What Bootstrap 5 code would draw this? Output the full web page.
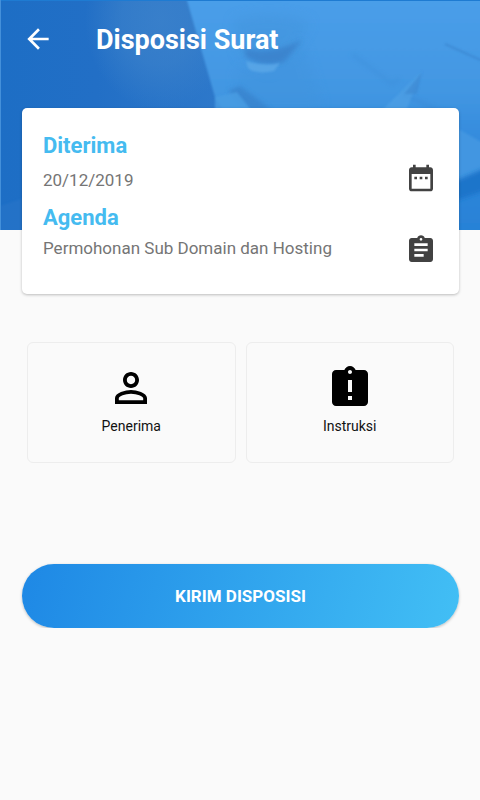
<!DOCTYPE html>
<html lang="id">
<head>
<meta charset="utf-8">
<meta name="viewport" content="width=device-width, initial-scale=1">
<title>Disposisi Surat</title>
<link rel="stylesheet" href="https://cdn.jsdelivr.net/npm/bootstrap@5.3.0/dist/css/bootstrap.min.css">
<style>
body{font-family:Roboto,sans-serif;background:#fafafa;color:#000}
.hero{height:230px;z-index:-1;background:#3b8edb}
.topbar{padding:23px 22px 0;height:108px;gap:42px}
.topbar h1{font-size:27px;line-height:34px;font-weight:700}
.back{width:32px;height:32px}
.page{padding:0 21px 0 22px}
.info{border-radius:5px;padding:22px 22px 22px 21px;min-height:186px;box-shadow:0 1px 3px rgba(0,0,0,.25)}
.info h2{font-size:22px;line-height:32px;font-weight:700;color:#45bbf0}
.info p{font-size:17px;line-height:28px;color:#757575}
.info svg{color:#424242}
.tiles{margin-top:48px;padding:0 5px}
.tiles .row{gap:10px}
.tile{height:121px;border:1px solid #ededed;border-radius:6px;font-size:14px;line-height:20px;color:#111;padding:0 0 6px}
.tile svg{color:#000;margin-bottom:4px}
.send{margin-top:101px;height:64px;padding:8px 12px 6px;font-size:17px;font-weight:700;background:linear-gradient(105deg,#1e88e5,#42bff5);box-shadow:0 1px 3px rgba(0,0,0,.25)}
</style>
<script src="https://cdn.jsdelivr.net/npm/bootstrap@5.3.0/dist/js/bootstrap.bundle.min.js"></script>
</head>
<body>
<div class="position-relative">
<svg class="hero position-absolute top-0 start-0 w-100" viewBox="0 0 480 230" preserveAspectRatio="none" aria-hidden="true">
<defs>
<linearGradient id="base" x1="0" y1="0" x2="1" y2="0"><stop offset="0" stop-color="#1d6ec5"/><stop offset=".2" stop-color="#226fc6"/><stop offset=".45" stop-color="#2d78ca"/></linearGradient>
<linearGradient id="desk" x1="0" y1="0" x2="0" y2="1"><stop offset="0" stop-color="#4a9fea"/><stop offset=".4" stop-color="#4397e2"/><stop offset=".65" stop-color="#3088dc"/><stop offset="1" stop-color="#2781d6"/></linearGradient>
<radialGradient id="glow"><stop offset="0" stop-color="#3c82cb" stop-opacity=".8"/><stop offset=".5" stop-color="#3c82cb" stop-opacity=".6"/><stop offset="1" stop-color="#3c82cb" stop-opacity="0"/></radialGradient>
<filter id="b1" x="-20%" y="-20%" width="140%" height="140%"><feGaussianBlur stdDeviation="1"/></filter>
<filter id="b2" x="-30%" y="-30%" width="160%" height="160%"><feGaussianBlur stdDeviation="2"/></filter>
<filter id="b6" x="-50%" y="-50%" width="200%" height="200%"><feGaussianBlur stdDeviation="6"/></filter>
</defs>
<rect width="480" height="230" fill="url(#base)"/>
<ellipse cx="160" cy="20" rx="75" ry="90" fill="url(#glow)"/>
<path d="M184-10H490V240H300L215 97Z" fill="url(#desk)" filter="url(#b1)"/>
<path d="M234 20q38-12 76 2l-22 38-20 12-28-16Z" fill="#4394dc" opacity=".5" filter="url(#b6)"/>
<path d="M236 72L302 40l20 68H240Z" fill="#3f93dc" opacity=".4" filter="url(#b6)"/>
<path d="M244 48q25 8 58-8l-18 22q-20 6-38-5Z" fill="#3b82cc" opacity=".85" filter="url(#b2)"/>
<path d="M246 61q18 6 34 2l-6 8q-18 4-26-3Z" fill="#5ba8e8" opacity=".8" filter="url(#b1)"/>
<path d="M228 91l12-5 32 24h-24Z" fill="#3782cc" opacity=".75" filter="url(#b2)"/>
<path d="M215 97l22-5 14 18h-36Z" fill="#4a9de3" opacity=".8" filter="url(#b1)"/>
<path d="M352 54l40 30 8-5" fill="none" stroke="#3c8dd8" stroke-width="4" opacity=".4" filter="url(#b2)"/>
<path d="M402 94l45 20" fill="none" stroke="#3886d2" stroke-width="4" opacity=".4" filter="url(#b2)"/>
<path d="M380 112l42-41-16 40Z" fill="#54a5e7" opacity=".5" filter="url(#b1)"/>
<path d="M404 94l18-22-5 22Z" fill="#3c89d3" opacity=".7" filter="url(#b1)"/>
<path d="M445 44l40 18" stroke="#3982cb" stroke-width="2" opacity=".6" filter="url(#b1)"/>
<path d="M455 127l35 20v24l-35 16Z" fill="#4296e1" filter="url(#b1)"/>
<path d="M455 181l35-15v23l-35 12Z" fill="#1e74ca" filter="url(#b2)"/>
<path d="M0 206l30-10v40H0Z" fill="#2d78ca" opacity=".4" filter="url(#b1)"/>
<rect width="480" height="1" fill="#1e7bd2"/>
<rect width="1" height="230" fill="#4490da"/>
</svg>
<header class="topbar d-flex align-items-start">
<a href="#" class="back text-white d-block" aria-label="Kembali"><svg class="d-block" width="32" height="32" viewBox="0 0 24 24" fill="currentColor"><path d="M20 11H7.830l5.590-5.590L12 4l-8 8 8 8 1.410-1.410L7.830 13H20z"/></svg></a>
<h1 class="text-white mb-0">Disposisi Surat</h1>
</header>
<main class="page">
<section class="info bg-white">
<h2 class="mb-0">Diterima</h2>
<div class="d-flex justify-content-between align-items-center">
<p class="mb-0 pt-1">20/12/2019</p>
<svg width="32" height="32" viewBox="0 0 24 24" fill="currentColor" aria-hidden="true"><path d="M9 11H7v2h2zm4 0h-2v2h2zm4 0h-2v2h2zm2-7h-1V2h-2v2H8V2H6v2H5c-1.110 0-2 .9-2 2v14c0 1.100.890 2 2 2h14c1.100 0 2-.9 2-2V6c0-1.100-.9-2-2-2zm0 16H5V9h14z"/></svg>
</div>
<h2 class="mb-0 pt-2">Agenda</h2>
<div class="d-flex justify-content-between align-items-start">
<p class="mb-0">Permohonan Sub Domain dan Hosting</p>
<svg class="flex-shrink-0" width="32" height="32" viewBox="0 0 24 24" fill="currentColor" aria-hidden="true"><path d="M19 3h-4.180C14.400 1.840 13.300 1 12 1s-2.400.84-2.820 2H5c-1.100 0-2 .9-2 2v14c0 1.100.9 2 2 2h14c1.100 0 2-.9 2-2V5c0-1.100-.9-2-2-2zm-7 0c.55 0 1 .45 1 1s-.45 1-1 1-1-.45-1-1 .45-1 1-1zm2 14H7v-2h7zm3-4H7v-2h10zm0-4H7V7h10z"/></svg>
</div>
</section>
<div class="tiles">
<div class="row g-0">
<div class="col"><button type="button" class="tile w-100 bg-transparent d-flex flex-column align-items-center justify-content-center"><svg width="48" height="48" viewBox="0 0 24 24" fill="currentColor" aria-hidden="true"><path d="M12 5.900c1.160 0 2.100.94 2.100 2.100s-.94 2.100-2.100 2.100S9.900 9.160 9.900 8s.94-2.100 2.100-2.100m0 9c2.970 0 6.100 1.460 6.100 2.100v1.100H5.900V17c0-.64 3.130-2.100 6.100-2.100M12 4C9.790 4 8 5.790 8 8s1.790 4 4 4 4-1.790 4-4-1.790-4-4-4zm0 9c-2.670 0-8 1.340-8 4v3h16v-3c0-2.660-5.330-4-8-4z"/></svg>Penerima</button></div>
<div class="col"><button type="button" class="tile w-100 bg-transparent d-flex flex-column align-items-center justify-content-center"><svg width="48" height="48" viewBox="0 0 24 24" fill="currentColor" aria-hidden="true"><path d="M19 3h-4.180C14.400 1.840 13.300 1 12 1s-2.400.84-2.820 2H5c-1.100 0-2 .9-2 2v14c0 1.100.9 2 2 2h14c1.100 0 2-.9 2-2V5c0-1.100-.9-2-2-2zm-6 15h-2v-2h2zm0-4h-2V8h2zm-1-9c-.55 0-1-.45-1-1s.45-1 1-1 1 .45 1 1-.45 1-1 1z"/></svg>Instruksi</button></div>
</div>
</div>
<button type="button" class="send btn rounded-pill border-0 w-100 text-white">KIRIM DISPOSISI</button>
</main>
</div>
</body>
</html>
